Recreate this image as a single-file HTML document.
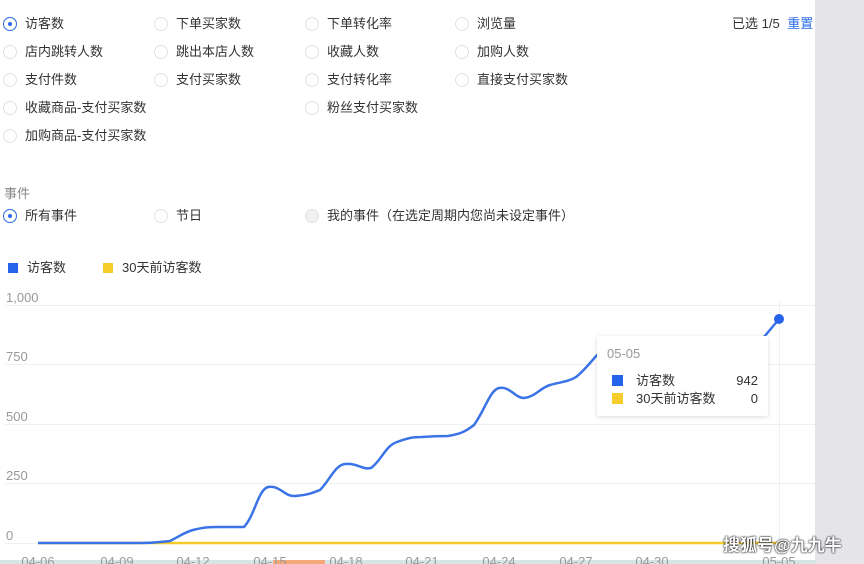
<!DOCTYPE html>
<html><head><meta charset="utf-8"><style>
body{margin:0;width:864px;height:564px;overflow:hidden;background:#fff;font-family:"Liberation Sans","Noto Sans CJK SC",sans-serif;font-size:13px;line-height:16px;color:#333;position:relative}
.r{position:absolute;display:flex;align-items:center;height:16px;white-space:nowrap}
.c{flex-shrink:0;width:14px;height:14px;border:1px solid #e2e2e2;border-radius:50%;margin-right:8px;box-sizing:border-box;position:relative}
.c.on{border-color:#2a6ae9}
.c.on:after{content:"";position:absolute;left:4px;top:4px;width:4px;height:4px;border-radius:50%;background:#2a6ae9}
.c.dis{background:#f0f0f0}
.t{position:absolute;white-space:nowrap}
</style></head><body>
<div style="position:absolute;left:815px;top:0;width:49px;height:564px;background:#e4e4e9"></div>
<div style="position:absolute;left:0;top:560px;width:815px;height:4px;background:#d6e6e6"></div>
<div style="position:absolute;left:273px;top:560px;width:52px;height:4px;background:#f4a97a"></div>

<div class="r" style="left:3px;top:16px"><span class="c on"></span>访客数</div>
<div class="r" style="left:154px;top:16px"><span class="c"></span>下单买家数</div>
<div class="r" style="left:305px;top:16px"><span class="c"></span>下单转化率</div>
<div class="r" style="left:455px;top:16px"><span class="c"></span>浏览量</div>
<div class="t" style="left:732px;top:16px">已选 1/5 <span style="color:#2a6ae9;margin-left:4px">重置</span></div>
<div class="r" style="left:3px;top:44px"><span class="c"></span>店内跳转人数</div>
<div class="r" style="left:154px;top:44px"><span class="c"></span>跳出本店人数</div>
<div class="r" style="left:305px;top:44px"><span class="c"></span>收藏人数</div>
<div class="r" style="left:455px;top:44px"><span class="c"></span>加购人数</div>
<div class="r" style="left:3px;top:72px"><span class="c"></span>支付件数</div>
<div class="r" style="left:154px;top:72px"><span class="c"></span>支付买家数</div>
<div class="r" style="left:305px;top:72px"><span class="c"></span>支付转化率</div>
<div class="r" style="left:455px;top:72px"><span class="c"></span>直接支付买家数</div>
<div class="r" style="left:3px;top:100px"><span class="c"></span>收藏商品-支付买家数</div>
<div class="r" style="left:305px;top:100px"><span class="c"></span>粉丝支付买家数</div>
<div class="r" style="left:3px;top:128px"><span class="c"></span>加购商品-支付买家数</div>

<div class="t" style="left:4px;top:186px;color:#888">事件</div>
<div class="r" style="left:3px;top:208px"><span class="c on"></span>所有事件</div>
<div class="r" style="left:154px;top:208px"><span class="c"></span>节日</div>
<div class="r" style="left:305px;top:208px"><span class="c dis"></span>我的事件（在选定周期内您尚未设定事件）</div>

<div class="r" style="left:8px;top:260px"><span style="flex-shrink:0;width:10px;height:10px;background:#2563eb;margin-right:9px"></span>访客数</div>
<div class="r" style="left:103px;top:260px"><span style="flex-shrink:0;width:10px;height:10px;background:#f5cc2a;margin-right:9px"></span>30天前访客数</div>

<svg width="815" height="564" style="position:absolute;left:0;top:0" font-family="Liberation Sans" font-size="13" fill="#999">
<g stroke="#eef0f5" stroke-width="1">
<line x1="5" y1="305.5" x2="815" y2="305.5"/><line x1="5" y1="364.5" x2="815" y2="364.5"/><line x1="5" y1="424.5" x2="815" y2="424.5"/><line x1="5" y1="483.5" x2="815" y2="483.5"/><line x1="5" y1="543.5" x2="815" y2="543.5"/>
<line x1="779.5" y1="300" x2="779.5" y2="550"/></g>
<text x="6" y="302">1,000</text><text x="6" y="361">750</text><text x="6" y="421">500</text><text x="6" y="480">250</text><text x="6" y="540">0</text>
<g text-anchor="middle"><text x="38" y="566">04-06</text><text x="117" y="566">04-09</text><text x="193" y="566">04-12</text><text x="270" y="566">04-15</text><text x="346" y="566">04-18</text><text x="422" y="566">04-21</text><text x="499" y="566">04-24</text><text x="576" y="566">04-27</text><text x="652" y="566">04-30</text><text x="779" y="566">05-05</text></g>
<line x1="38" y1="543" x2="779" y2="543" stroke="#f5cc2a" stroke-width="2.5"/>
<path d="M38,543 L140,543 C155,543 160,542 170,541 C180,536 185,532 193,530 C205,527 210,527 218,527 L244,527 C255,515 258,490 268,487 C280,485 285,497 295,496 C308,495 312,493 320,490 C330,480 335,465 345,464 C358,463 362,470 371,468 C382,460 385,446 397,442 C408,438 412,437 422,437 C435,436 440,436 448,436 C460,434 465,432 474,425 C485,410 490,390 499,388 C510,386 515,398 524,398 C535,397 540,388 550,385 C560,382 568,382 576,377 C585,370 592,360 600,352 L764,337 L779,319" fill="none" stroke="#3a73e8" stroke-width="2.5"/>
<circle cx="779" cy="319" r="5" fill="#2563eb"/>
</svg>

<div style="position:absolute;left:597px;top:336px;width:171px;height:80px;background:#fff;box-shadow:0 1px 5px rgba(0,0,0,.15);border-radius:2px">
<div style="position:absolute;left:10px;top:10px;color:#999">05-05</div>
<div style="position:absolute;left:15px;top:39px;width:11px;height:11px;background:#2563eb"></div>
<div style="position:absolute;left:39px;top:37px">访客数</div><div style="position:absolute;right:10px;top:37px">942</div>
<div style="position:absolute;left:15px;top:57px;width:11px;height:11px;background:#f5cc2a"></div>
<div style="position:absolute;left:39px;top:55px">30天前访客数</div><div style="position:absolute;right:10px;top:55px">0</div>
</div>
<div style="position:absolute;left:723px;top:535px;font-size:17px;line-height:22px;font-weight:bold;color:#fff;text-shadow:0 0 2px #000,0 0 1px #000">搜狐号@九九牛</div>
</body></html>
